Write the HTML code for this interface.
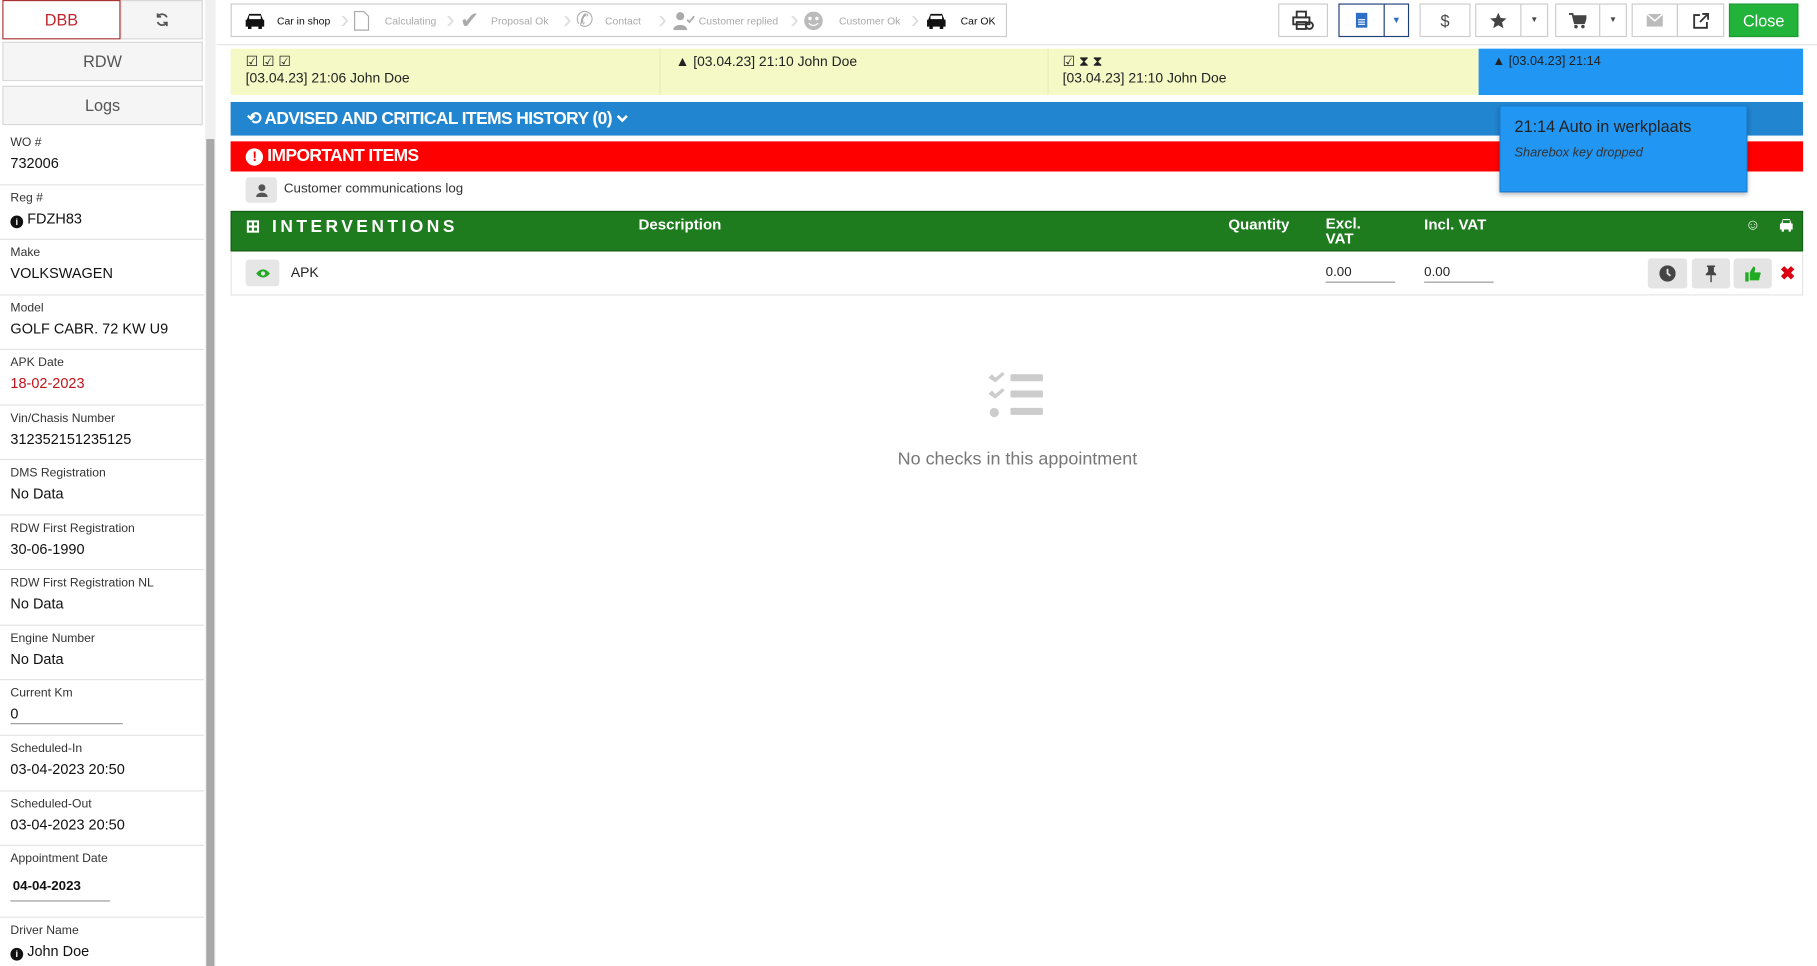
<!DOCTYPE html>
<html><head><meta charset="utf-8"><style>
*{box-sizing:border-box;margin:0;padding:0}
html,body{width:1817px;height:966px;overflow:hidden;background:#fff}
#w{width:1568px;height:834px;transform:scale(1.1588);transform-origin:0 0;position:relative;font-family:"Liberation Sans",sans-serif;color:#222}
.a{position:absolute}
.btn{position:absolute;background:#f5f5f5;border:1px solid #d8d8d8;display:flex;align-items:center;justify-content:center;color:#555;font-size:14px}
.row{position:absolute;left:0;width:176px;height:47.5px;border-bottom:1px solid #e3e3e3;padding:4px 9px}
.row .l{font-size:10.5px;color:#333;margin-top:1px}
.row .v{font-size:12.5px;color:#111;margin-top:5px}
.step{position:absolute;top:3px;height:29px;display:flex;align-items:center;font-size:9px;color:#aaa}
.tb{position:absolute;top:3px;height:29px;border:1px solid #ccc;background:#fff;display:flex;align-items:center;justify-content:center;color:#444;font-size:14px}
.wh{color:#fff;font-weight:bold}
.ib{position:absolute;top:223px;height:26px;background:#e4e4e4;border-radius:3px;display:flex;align-items:center;justify-content:center}
</style></head><body><div id="w">
<div class="btn" style="left:2px;top:0;width:102px;height:34px;border:1px solid #a33;color:#c0262d;font-size:14px;background:#fff">DBB</div>
<div class="btn" style="left:104px;top:0;width:71px;height:34px">
<svg width="14" height="14" viewBox="0 0 14 14" fill="none" stroke="#555" stroke-width="1.5"><path d="M11 5A4.5 4.5 0 0 0 3 4.5M3 9a4.5 4.5 0 0 0 8 .5"/><path d="M3 1.5v3h3M11 12.5v-3H8"/></svg></div>
<div class="btn" style="left:2px;top:36px;width:173px;height:34px">RDW</div>
<div class="btn" style="left:2px;top:74px;width:173px;height:34px">Logs</div>
<div class="a" style="left:177px;top:0;width:9px;height:834px;background:#f0f0f0"></div>
<div class="a" style="left:178px;top:120px;width:7px;height:714px;background:#a8a8a8"></div>
<div class="row" style="top:112px"><div class="l">WO #</div><div class="v">732006</div></div>
<div class="row" style="top:159.5px"><div class="l">Reg #</div><div class="v"><span style="display:inline-block;width:11px;height:11px;border-radius:50%;background:#111;color:#fff;font-size:8px;text-align:center;line-height:11px;font-weight:bold;vertical-align:-1px">i</span> FDZH83</div></div>
<div class="row" style="top:207px"><div class="l">Make</div><div class="v">VOLKSWAGEN</div></div>
<div class="row" style="top:254.5px"><div class="l">Model</div><div class="v">GOLF CABR. 72 KW U9</div></div>
<div class="row" style="top:302px"><div class="l">APK Date</div><div class="v" style="color:#c0151b">18-02-2023</div></div>
<div class="row" style="top:349.5px"><div class="l">Vin/Chasis Number</div><div class="v">312352151235125</div></div>
<div class="row" style="top:397px"><div class="l">DMS Registration</div><div class="v">No Data</div></div>
<div class="row" style="top:444.5px"><div class="l">RDW First Registration</div><div class="v">30-06-1990</div></div>
<div class="row" style="top:492px"><div class="l">RDW First Registration NL</div><div class="v">No Data</div></div>
<div class="row" style="top:539.5px"><div class="l">Engine Number</div><div class="v">No Data</div></div>
<div class="row" style="top:587px;height:48px"><div class="l">Current Km</div><div class="v" style="border-bottom:1px solid #999;width:97px;padding-bottom:1px">0</div></div>
<div class="row" style="top:635px"><div class="l">Scheduled-In</div><div class="v">03-04-2023 20:50</div></div>
<div class="row" style="top:682.5px"><div class="l">Scheduled-Out</div><div class="v">03-04-2023 20:50</div></div>
<div class="row" style="top:730px;height:62px"><div class="l">Appointment Date</div><div class="v" style="font-weight:bold;font-size:11.5px;margin-top:12px;padding:0 2px 6px;border-bottom:1px solid #999;width:86px">04-04-2023</div></div>
<div class="row" style="top:792px;border:0"><div class="l">Driver Name</div><div class="v"><span style="display:inline-block;width:11px;height:11px;border-radius:50%;background:#111;color:#fff;font-size:8px;text-align:center;line-height:11px;font-weight:bold;vertical-align:-1px">i</span> John Doe</div></div>

<div class="a" style="left:199px;top:3px;width:670px;height:29px;border:1px solid #ccc"></div>
<div class="a" style="left:187px;top:38px;width:1381px;height:1px;background:#e5e5e5"></div>
<div class="step" style="left:210px;color:#111"><svg width="20" height="16" viewBox="0 0 20 16"><path d="M3 7l2-5h10l2 5h1v6h-2v2h-3v-2H7v2H4v-2H2V7z" fill="#111"/><rect x="5" y="3.5" width="10" height="3" fill="#fff"/></svg><span style="margin-left:9px">Car in shop</span></div>
<div class="step" style="left:304px"><svg width="16" height="18" viewBox="0 0 16 18" fill="none" stroke="#aaa"><path d="M2 1h8l4 4v12H2z"/></svg><span style="margin-left:12px">Calculating</span></div>
<div class="step" style="left:397px"><span style="font-size:20px;color:#aaa">✔</span><span style="margin-left:10px">Proposal Ok</span></div>
<div class="step" style="left:497px"><span style="font-size:18px;color:#aaa">✆</span><span style="margin-left:10px">Contact</span></div>
<div class="step" style="left:581px"><svg width="22" height="16" viewBox="0 0 22 16"><circle cx="6" cy="4" r="3.5" fill="#aaa"/><path d="M0 16c0-6 12-6 12 0z" fill="#aaa"/><path d="M12 7l2 2 4-5" stroke="#aaa" fill="none" stroke-width="1.5"/></svg><span>Customer replied</span></div>
<div class="step" style="left:693px"><svg width="18" height="18"><circle cx="9" cy="9" r="8" fill="#bbb"/><circle cx="6" cy="7" r="1.5" fill="#fff"/><circle cx="12" cy="7" r="1.5" fill="#fff"/><path d="M5 11q4 4 8 0" stroke="#fff" fill="none"/></svg><span style="margin-left:13px">Customer Ok</span></div>
<div class="step" style="left:798px;color:#111"><svg width="20" height="16" viewBox="0 0 20 16"><path d="M3 7l2-5h10l2 5h1v6h-2v2h-3v-2H7v2H4v-2H2V7z" fill="#111"/><rect x="5" y="3.5" width="10" height="3" fill="#fff"/></svg><span style="margin-left:11px">Car OK</span></div>
<div class="a" style="left:294px;top:3px;color:#ddd;font-size:22px;line-height:27px">›</div>
<div class="a" style="left:385px;top:3px;color:#ddd;font-size:22px;line-height:27px">›</div>
<div class="a" style="left:486px;top:3px;color:#ddd;font-size:22px;line-height:27px">›</div>
<div class="a" style="left:568px;top:3px;color:#ddd;font-size:22px;line-height:27px">›</div>
<div class="a" style="left:682px;top:3px;color:#ddd;font-size:22px;line-height:27px">›</div>
<div class="a" style="left:786px;top:3px;color:#ddd;font-size:22px;line-height:27px">›</div>

<div class="tb" style="left:1103px;width:43px"><svg width="20" height="18" viewBox="0 0 20 18" fill="none" stroke="#333" stroke-width="1.6"><rect x="4" y="1" width="8" height="5"/><rect x="1" y="6" width="14" height="6"/><rect x="4" y="10" width="8" height="6"/><circle cx="15" cy="13" r="3"/></svg></div>
<div class="tb" style="left:1155px;width:40px;border-color:#1f3f7a"><svg width="10" height="13"><rect width="10" height="13" fill="#2d6fc6"/><path d="M2 6h6M2 8h6M2 10h6" stroke="#fff"/></svg></div>
<div class="tb" style="left:1194px;width:22px;border-color:#1f3f7a;font-size:8px;color:#2d6fc6">▼</div>
<div class="tb" style="left:1225px;width:44px">$</div>
<div class="tb" style="left:1273px;width:40px"><svg width="14" height="14" viewBox="0 0 14 14"><path d="M7 0l2 4.5 5 .5-3.8 3.3 1.2 5L7 10.8 2.6 13.3l1.2-5L0 5l5-.5z" fill="#444"/></svg></div>
<div class="tb" style="left:1312px;width:24px;font-size:7px">▼</div>
<div class="tb" style="left:1342px;width:39px"><svg width="15" height="14" viewBox="0 0 15 14"><path d="M0 1h3l2 8h8l2-6H4" fill="none" stroke="#444" stroke-width="1.6"/><path d="M4 3h11l-2 6H5z" fill="#444"/><circle cx="6" cy="12" r="1.5" fill="#444"/><circle cx="12" cy="12" r="1.5" fill="#444"/></svg></div>
<div class="tb" style="left:1380px;width:24px;font-size:7px">▼</div>
<div class="tb" style="left:1408px;width:40px"><svg width="14" height="11"><rect width="14" height="11" fill="#bbb"/><path d="M0 0l7 6 7-6" stroke="#fff" fill="none" stroke-width="1.3"/></svg></div>
<div class="tb" style="left:1447px;width:41px"><svg width="14" height="14" viewBox="0 0 14 14" fill="none" stroke="#333" stroke-width="1.6"><path d="M6 2H1v11h11V8"/><path d="M8 1h5v5M13 1L6 8"/></svg></div>
<div class="tb" style="left:1492px;width:60px;background:#22b33b;border-color:#1c9a31;color:#fff;font-size:14px">Close</div>

<div class="a" style="left:199px;top:42px;width:1077px;height:40px;background:#f4f9c6"></div>
<div class="a" style="left:569px;top:42px;width:1px;height:40px;background:#e8edb8"></div>
<div class="a" style="left:904px;top:42px;width:1px;height:40px;background:#e8edb8"></div>
<div class="a" style="left:1276px;top:42px;width:280px;height:40px;background:#2196f3"></div>
<div class="a" style="left:212px;top:46px;font-size:12px;line-height:14px">☑ ☑ ☑<br>[03.04.23] 21:06 John Doe</div>
<div class="a" style="left:583px;top:46px;font-size:12px;line-height:14px">▲ [03.04.23] 21:10 John Doe</div>
<div class="a" style="left:917px;top:46px;font-size:12px;line-height:14px">☑ ⧗ ⧗<br>[03.04.23] 21:10 John Doe</div>
<div class="a" style="left:1288px;top:47px;font-size:11px;color:#222">▲ [03.04.23] 21:14</div>

<div class="a" style="left:199px;top:88px;width:1357px;height:29px;background:#2185d0"></div>
<div class="a wh" style="left:213px;top:93px;font-size:15px;letter-spacing:-0.5px">⟲ ADVISED AND CRITICAL ITEMS HISTORY (0) <svg width="10" height="8" viewBox="0 0 10 8"><path d="M1 1l4 4 4-4" stroke="#fff" stroke-width="2.2" fill="none"/></svg></div>
<div class="a" style="left:199px;top:122px;width:1357px;height:26px;background:#ff0000"></div>
<div class="a wh" style="left:212px;top:126px;font-size:15px;letter-spacing:-0.5px"><span style="display:inline-block;width:15px;height:15px;border-radius:50%;background:#fff;color:#f00;text-align:center;line-height:15px;font-size:12px">!</span> IMPORTANT ITEMS</div>
<div class="a" style="left:212px;top:153px;width:27px;height:22px;background:#e6e6e6;border-radius:3px;display:flex;align-items:center;justify-content:center"><svg width="10" height="11"><circle cx="5" cy="3" r="3" fill="#555"/><path d="M0 11c0-5 10-5 10 0z" fill="#555"/></svg></div>
<div class="a" style="left:245px;top:157px;font-size:11.5px;color:#333">Customer communications log</div>
<div class="a" style="left:199px;top:182px;width:1357px;height:35px;background:#1e7b1e;border:1px solid #155e15"></div>
<div class="a wh" style="left:212px;top:186px;font-size:15px;letter-spacing:3px">⊞ INTERVENTIONS</div>
<div class="a wh" style="left:551px;top:186px;font-size:13px">Description</div>
<div class="a wh" style="left:1060px;top:186px;font-size:13px">Quantity</div>
<div class="a wh" style="left:1144px;top:186px;font-size:13px;line-height:13px">Excl.<br>VAT</div>
<div class="a wh" style="left:1229px;top:186px;font-size:13px">Incl. VAT</div>
<div class="a wh" style="left:1506px;top:186px;font-size:13px">☺</div>
<svg class="a" style="left:1535px;top:188px" width="13" height="12" viewBox="0 0 13 12"><path d="M2 5l1.5-4h6L11 5h1v5h-1.5v2h-2v-2h-4v2h-2v-2H1V5z" fill="#fff"/><rect x="3.5" y="2" width="6" height="2.5" fill="#1e7b1e"/></svg>
<div class="a" style="left:199px;top:217px;width:1357px;height:38px;border:1px solid #e5e5e5;border-top:0"></div>
<div class="a" style="left:212px;top:224px;width:29px;height:23px;background:#e6e6e6;border-radius:3px;display:flex;align-items:center;justify-content:center"><svg width="12" height="8" viewBox="0 0 12 8"><path d="M0 4q6-7 12 0q-6 7-12 0z" fill="#2a2"/><circle cx="6" cy="4" r="1.8" fill="#e6e6e6"/></svg></div>
<div class="a" style="left:251px;top:228px;font-size:12px">APK</div>
<div class="a" style="left:1144px;top:229px;width:60px;border-bottom:1px solid #999;font-size:11.5px;padding-bottom:2px">0.00</div>
<div class="a" style="left:1229px;top:229px;width:60px;border-bottom:1px solid #999;font-size:11.5px;padding-bottom:2px">0.00</div>
<div class="ib" style="left:1422px;width:34px"><svg width="14" height="14"><circle cx="7" cy="7" r="7" fill="#444"/><path d="M7 3v4l2.5 2" stroke="#e4e4e4" stroke-width="1.6" fill="none"/></svg></div>
<div class="ib" style="left:1460px;width:33px"><svg width="11" height="15" viewBox="0 0 11 15"><path d="M2 0h7v1.5H8v4l2 2v1H1v-1l2-2v-4H2z" fill="#444"/><rect x="5" y="8.5" width="1.2" height="6" fill="#444"/></svg></div>
<div class="ib" style="left:1496px;width:33px"><svg width="14" height="14" viewBox="0 0 14 14"><rect x="0" y="6" width="3" height="8" fill="#2a2"/><path d="M4 6l3-5q2 0 1.5 3L8 6h5q1 1 0 2l-1 5H4z" fill="#2a2"/></svg></div>
<div class="a" style="left:1536px;top:226px;color:#d01;font-size:16px;font-weight:bold">✖</div>

<div class="a" style="left:1294px;top:91px;width:214px;height:75px;background:#2196f3;border:1px solid #1a7fd0;box-shadow:0 2px 4px rgba(0,0,0,.3);padding:9px 12px">
<div style="font-size:14px;color:#222">21:14 Auto in werkplaats</div>
<div style="font-size:11px;color:#333;font-style:italic;margin-top:9px">Sharebox key dropped</div></div>

<svg class="a" style="left:852px;top:321px" width="50" height="40" viewBox="0 0 50 40"><g fill="#ccc"><path d="M1 5l3-3 3 3 6-5 2 2-8 7z"/><path d="M1 19l3-3 3 3 6-5 2 2-8 7z"/><circle cx="6" cy="35" r="4"/><rect x="20" y="2" width="28" height="6" rx="1"/><rect x="20" y="16" width="28" height="6" rx="1"/><rect x="20" y="31" width="28" height="6" rx="1"/></g></svg>
<div class="a" style="left:700px;top:388px;width:356px;text-align:center;font-size:15.5px;color:#777">No checks in this appointment</div>
</div></body></html>
